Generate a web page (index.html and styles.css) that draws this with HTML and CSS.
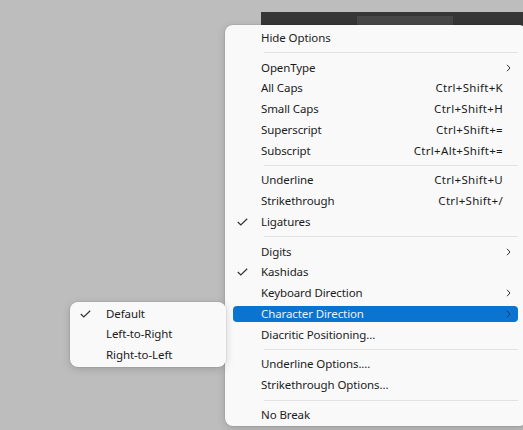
FILE: index.html
```html
<!DOCTYPE html>
<html>
<head>
<meta charset="utf-8">
<link rel="stylesheet" href="styles.css">
</head>
<body>
<div class="stage">
  <div class="appbar"><div class="appbar-tab"></div></div>

  <div class="menu main">
    <div class="item"><span class="label">Hide Options</span></div>
    <div class="sep"></div>
    <div class="item"><span class="label">OpenType</span><span class="chev"><svg width="5" height="8" viewBox="0 0 5 8"><path d="M1 0.8 L4 4 L1 7.2" fill="none" stroke="#333" stroke-width="1"/></svg></span></div>
    <div class="item"><span class="label">All Caps</span><span class="key">Ctrl+Shift+K</span></div>
    <div class="item"><span class="label">Small Caps</span><span class="key">Ctrl+Shift+H</span></div>
    <div class="item"><span class="label">Superscript</span><span class="key">Ctrl+Shift+=</span></div>
    <div class="item"><span class="label">Subscript</span><span class="key">Ctrl+Alt+Shift+=</span></div>
    <div class="sep"></div>
    <div class="item"><span class="label">Underline</span><span class="key">Ctrl+Shift+U</span></div>
    <div class="item"><span class="label">Strikethrough</span><span class="key">Ctrl+Shift+/</span></div>
    <div class="item"><span class="check"><svg width="11" height="8" viewBox="0 0 11 8"><path d="M0.8 4 L3.8 7 L10.2 0.8" fill="none" stroke="#333" stroke-width="1.2"/></svg></span><span class="label">Ligatures</span></div>
    <div class="sep"></div>
    <div class="item"><span class="label">Digits</span><span class="chev"><svg width="5" height="8" viewBox="0 0 5 8"><path d="M1 0.8 L4 4 L1 7.2" fill="none" stroke="#333" stroke-width="1"/></svg></span></div>
    <div class="item"><span class="check"><svg width="11" height="8" viewBox="0 0 11 8"><path d="M0.8 4 L3.8 7 L10.2 0.8" fill="none" stroke="#333" stroke-width="1.2"/></svg></span><span class="label">Kashidas</span></div>
    <div class="item"><span class="label">Keyboard Direction</span><span class="chev"><svg width="5" height="8" viewBox="0 0 5 8"><path d="M1 0.8 L4 4 L1 7.2" fill="none" stroke="#333" stroke-width="1"/></svg></span></div>
    <div class="item active"><span class="label">Character Direction</span><span class="chev"><svg width="5" height="8" viewBox="0 0 5 8"><path d="M1 0.8 L4 4 L1 7.2" fill="none" stroke="#1d3550" stroke-width="1"/></svg></span></div>
    <div class="item"><span class="label">Diacritic Positioning...</span></div>
    <div class="sep"></div>
    <div class="item"><span class="label">Underline Options....</span></div>
    <div class="item"><span class="label">Strikethrough Options...</span></div>
    <div class="sep"></div>
    <div class="item"><span class="label">No Break</span></div>
  </div>

  <div class="menu sub">
    <div class="item"><span class="check"><svg width="11" height="8" viewBox="0 0 11 8"><path d="M0.8 4 L3.8 7 L10.2 0.8" fill="none" stroke="#333" stroke-width="1.2"/></svg></span><span class="label">Default</span></div>
    <div class="item"><span class="label">Left-to-Right</span></div>
    <div class="item"><span class="label">Right-to-Left</span></div>
  </div>
</div>
</body>
</html>
```

FILE: styles.css
```css
html, body {
  margin: 0;
  padding: 0;
  background: #bdbdbd;
}

.stage {
  position: relative;
  width: 523px;
  height: 430px;
  overflow: hidden;
  background: #bdbdbd;
  font-family: "Noto Sans", "Open Sans", sans-serif;
  font-size: 11.5px;
  color: #1b1b1b;
}

.appbar {
  position: absolute;
  left: 261px;
  top: 12px;
  right: 0;
  height: 20px;
  background: #363636;
}

.appbar-tab {
  position: absolute;
  left: 96px;
  top: 4px;
  width: 96px;
  height: 16px;
  background: #474747;
}

.menu {
  position: absolute;
  display: flex;
  flex-direction: column;
  background: #f9f9f9;
  border-radius: 8px;
  box-shadow: 0 2px 8px rgba(0, 0, 0, 0.16), 0 0 0 1px rgba(0, 0, 0, 0.05);
  box-sizing: border-box;
}

.main {
  left: 225px;
  top: 25px;
  width: 302px;
  height: 401px;
  padding: 2.6px 9px 0 8px;
}

.sub {
  left: 70px;
  top: 302px;
  width: 156px;
  height: 65px;
  padding: 1.6px 6px 0 6px;
}

.item {
  position: relative;
  display: flex;
  align-items: center;
  height: 16px;
  margin: 2.375px 0;
  padding: 0 15px 0 28px;
  border-radius: 4px;
  white-space: nowrap;
  line-height: 16px;
}

.sub .item {
  padding-left: 30px;
  margin: 2.25px 0;
}

.label {
  flex: 1;
  letter-spacing: -0.1px;
}

.key {
  text-align: right;
  letter-spacing: 0.3px;
}

.check {
  position: absolute;
  left: 4px;
  top: 4px;
  width: 11px;
  height: 8px;
  display: flex;
}

.chev {
  position: absolute;
  right: 7px;
  top: 4px;
  width: 5px;
  height: 8px;
  display: flex;
}

.item.active {
  background: #0a74d0;
  color: #e9f1fa;
}

.sep {
  height: 1px;
  background: #e2e2e2;
  margin: 4px 0 4px 31px;
  flex: none;
}
```
